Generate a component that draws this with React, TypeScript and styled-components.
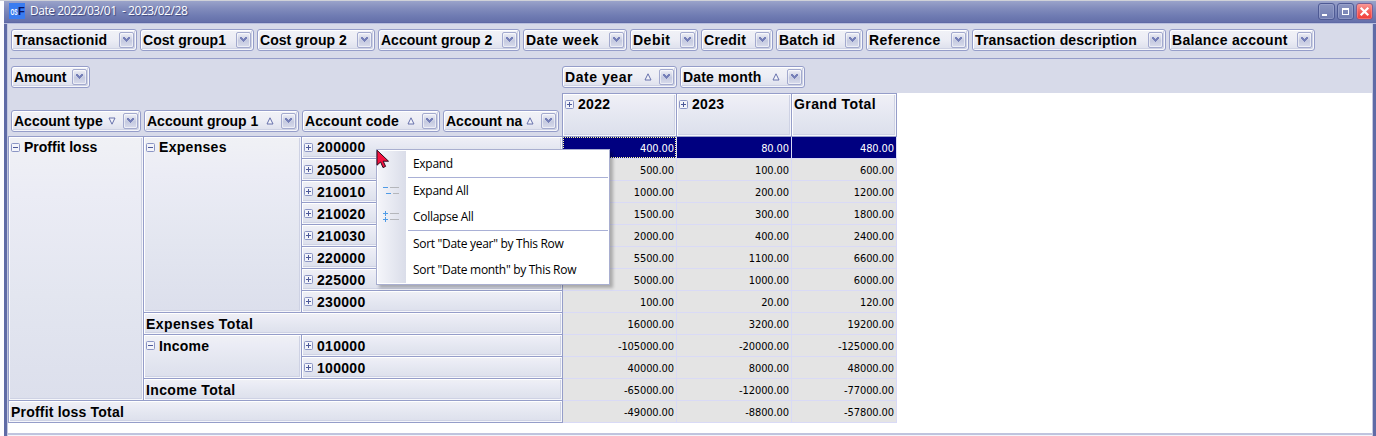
import React from "react";
import styled, { createGlobalStyle, css } from "styled-components";

const line = "#959dc9";
const lavender = "#d7dae9";

const GlobalStyle = createGlobalStyle`
  * { box-sizing: border-box; }
  html, body { margin: 0; background: #fdfdff; }
  body { width: 1376px; height: 436px; overflow: hidden; color: #000; }
`;

const Window = styled.div`
  width: 1376px;
  height: 436px;
  padding-left: 4px;
  overflow: hidden;
  border-top: 1px solid #cfd1d8;
  display: flex;
  flex-direction: column;
`;

const TitleBar = styled.header`
  height: 23px;
  flex: none;
  display: flex;
  align-items: center;
  padding: 0 3px 3px 5px;
  background: linear-gradient(#9aa3ca 0, #838dbd 7px, #6f7bb2 15px, #6570aa 21px, #5863a0 22px, #b9bfdf 22px);
`;

const Title = styled.h1`
  flex: 1;
  margin: 0 0 0 5px;
  font: 400 12px/18px "Open Sans", "Noto Sans", sans-serif;
  letter-spacing: -0.44px;
  white-space: pre;
  color: #fff;
  text-shadow: 1px 1px 1px #3c467c;
`;

const WindowButtons = styled.div`
  display: flex;
  gap: 2px;
`;

const WindowButton = styled.button<{ $close?: boolean }>`
  width: 17px;
  height: 17px;
  padding: 0;
  border: 1px solid ${(p) => (p.$close ? "#7d5f92" : "#4e5a94")};
  border-radius: 3px;
  background: ${(p) => (p.$close ? "linear-gradient(#f99a96, #f4605c 50%, #f03c37)" : "linear-gradient(#8c96c1, #707cb1)")};
  box-shadow: inset 0 0 0 1px ${(p) => (p.$close ? "rgba(255,150,150,.5)" : "rgba(170,178,215,.45)")};
  svg { display: block; }
`;

const Frame = styled.main`
  flex: 1;
  display: flex;
  flex-direction: column;
  padding: 0 1px;
  border-left: 3px solid #5f6ba6;
  border-right: 3px solid #5f6ba6;
  background: #c3c8e0;
`;

const FieldBar = styled.section`
  flex: none;
  height: 35px;
  display: flex;
  align-items: flex-start;
  gap: 3px;
  padding: 5px 0 0 3px;
  background: linear-gradient(${line}, ${line}) 2px 34px / 1360px 1px no-repeat ${lavender};
`;

const bevel = css`
  box-shadow: inset 1px 1px #fff, inset -1px -1px #f6f7fb, inset -2px -2px #ced2e4;
`;

const Chip = styled.div<{ $w: number }>`
  flex: none;
  width: ${(p) => p.$w}px;
  height: 22px;
  display: flex;
  align-items: center;
  padding: 0 2px 0 2px;
  border: 1px solid ${line};
  border-radius: 3px;
  background: linear-gradient(#f1f2f7, #ecedf5 50%, #dcdfec);
  ${bevel}
`;

const Label = styled.span<{ $track?: number }>`
  font: 700 14px/16px "Liberation Sans", Arial, sans-serif;
  letter-spacing: ${(p) => p.$track ?? 0}px;
  white-space: nowrap;
`;

const ChipLabel = styled(Label)`
  flex: 1;
  min-width: 0;
`;

const SortMark = styled.svg`
  flex: none;
  width: 8px;
  height: 8px;
  margin-right: 7px;
`;

const FilterButton = styled.button`
  flex: none;
  width: 15px;
  height: 16px;
  padding: 0;
  border: 1px solid #a3aace;
  border-radius: 2px;
  background: linear-gradient(#f0f1f7, #c5cae0 55%, #d9dcec);
  box-shadow: inset 0 0 0 1px rgba(255, 255, 255, 0.55);
  svg { display: block; }
`;

type Sort = "asc" | "desc";
type Field = { name: string; w: number; track?: number; sort?: Sort };

const FieldChip = ({ name, w, track, sort }: Field) => (
  <Chip $w={w}>
    <ChipLabel $track={track}>{name}</ChipLabel>
    {sort && (
      <SortMark viewBox="0 0 8 8">
        <path d={sort === "asc" ? "M4 .8L7 7H1z" : "M4 7.2L1 1h6z"} fill="#f4f5fb" stroke="#6670ab" />
      </SortMark>
    )}
    <FilterButton aria-label={`Filter ${name}`}>
      <svg width="13" height="14" viewBox="0 0 13 14">
        <path d="M3 4h2v1h1v1h1V5h1V4h2v2H9v1H8v1H7v1H6V8H5V7H4V6H3z" fill="#7680b8" />
      </svg>
    </FilterButton>
  </Chip>
);

const PivotHead = styled.section`
  flex: none;
  height: 78px;
  display: flex;
`;

const RowFieldArea = styled.div`
  width: 554px;
  flex: none;
  display: flex;
  flex-direction: column;
  justify-content: space-between;
  padding: 7px 3px 4px;
  background: ${lavender};
  border-bottom: 1px solid ${line};
`;

const ChipRow = styled.div`
  display: flex;
  gap: 3px;
`;

const ColumnArea = styled.div`
  flex: 1;
  background: #fff;
`;

const ColumnFields = styled(ChipRow)`
  height: 34px;
  padding-top: 7px;
  background: ${lavender};
`;

const ColumnHeads = styled.div`
  width: 335px;
  height: 44px;
  display: grid;
  grid-template-columns: 114px 115px 105px;
  border-left: 1px solid ${line};
  border-top: 1px solid ${line};
`;

const HeadCell = styled.div<{ $lowered?: boolean; $row?: string; $col?: string }>`
  display: flex;
  align-items: flex-start;
  gap: 4px;
  padding: 2px 2px 0;
  grid-row: ${(p) => p.$row ?? "auto"};
  grid-column: ${(p) => p.$col ?? "auto"};
  border-right: 1px solid ${line};
  border-bottom: 1px solid ${line};
  background: linear-gradient(#f0f1f5, #ebecf5 22%, #e3e6f0 60%, #dcdfec);
  ${bevel}
  ${Label} { margin-top: ${(p) => (p.$lowered ? 1 : 0)}px; }
`;

const Toggle = styled.svg`
  flex: none;
  width: 9px;
  height: 9px;
  margin-top: 4px;
`;

const ExpandToggle = ({ open }: { open?: boolean }) => (
  <Toggle viewBox="0 0 9 9">
    <rect x=".5" y=".5" width="8" height="8" rx="1" fill="#f3f4fa" stroke="#8b95c4" />
    <path d={open ? "M2 4.5h5" : "M2 4.5h5M4.5 2v5"} stroke="#4c5898" />
  </Toggle>
);

const PivotBody = styled.section`
  flex: none;
  height: 296px;
  display: flex;
  align-items: flex-start;
  background: #fff;
`;

const RowHeads = styled.div`
  flex: none;
  width: 555px;
  display: grid;
  grid-template-columns: 135px 158px 261px;
  grid-template-rows: repeat(13, 22px);
  border-left: 1px solid ${line};
`;

const Values = styled.div`
  display: grid;
  grid-template-columns: 114px 115px 105px;
  grid-auto-rows: 22px;
`;

const focusRing = css`
  position: relative;
  &::after {
    content: "";
    position: absolute;
    inset: 0;
    border: 1px dotted #ffff9c;
  }
`;

const Value = styled.div<{ $selected?: boolean; $focus?: boolean }>`
  padding: 1px 2px 0 0;
  text-align: right;
  font: 11px/21px "DejaVu Sans Condensed", "DejaVu Sans", sans-serif;
  font-stretch: condensed;
  letter-spacing: -0.1px;
  border-right: 1px solid #d9daf6;
  border-bottom: 1px solid #d9daf6;
  background: ${(p) => (p.$selected ? "#000080" : "#e4e4e4")};
  color: ${(p) => (p.$selected ? "#fff" : "#000")};
  ${(p) => p.$focus && focusRing}
`;

const BottomEdge = styled.footer`
  flex: 1;
  border-top: 2px solid #bfc4de;
  background: #f4f5fb;
`;

const Menu = styled.div`
  position: absolute;
  left: 376px;
  top: 149px;
  width: 234px;
  height: 136px;
  padding: 1px;
  border: 1px solid #a9afd0;
  background: linear-gradient(90deg, #f4f5fa, #dadde9) 1px 1px / 28px 132px no-repeat #fff;
  box-shadow: 3px 3px 3px rgba(0, 0, 0, 0.25);
`;

const MenuItem = styled.div`
  height: 26px;
  display: flex;
  align-items: center;
  font: 12px/26px "Open Sans", "Noto Sans", sans-serif;
  letter-spacing: -0.3px;
  white-space: nowrap;
`;

const MenuIcon = styled.svg`
  flex: none;
  width: 17px;
  height: 12px;
  margin: 0 13px 0 5px;
  shape-rendering: crispEdges;
`;

const MenuRule = styled.hr`
  height: 1px;
  margin: 0 0 0 30px;
  border: 0;
  background: #a9b0d6;
`;

const Cursor = styled.svg`
  position: absolute;
  left: 376px;
  top: 149px;
  width: 14px;
  height: 20px;
`;

const filterFields: Field[] = [
  { name: "Transactionid", w: 126, track: 0.17 },
  { name: "Cost group1", w: 114, track: 0.05 },
  { name: "Cost group 2", w: 118, track: 0.05 },
  { name: "Account group 2", w: 142 },
  { name: "Date week", w: 104, track: 0.5 },
  { name: "Debit", w: 68, track: 0.5 },
  { name: "Credit", w: 72, track: 0.3 },
  { name: "Batch id", w: 87, track: 0.12 },
  { name: "Reference", w: 103, track: 0.45 },
  { name: "Transaction description", w: 194, track: 0.18 },
  { name: "Balance account", w: 146, track: 0.3 },
];

const rowFields: Field[] = [
  { name: "Account type", w: 130, sort: "desc" },
  { name: "Account group 1", w: 155, sort: "asc" },
  { name: "Account code", w: 138, track: 0.1, sort: "asc" },
  { name: "Account na", w: 116, sort: "asc" },
];

const columnFields: Field[] = [
  { name: "Date year", w: 115, track: 0.55, sort: "asc" },
  { name: "Date month", w: 125, track: 0.15, sort: "asc" },
];

const expenseCodes = ["200000", "205000", "210010", "210020", "210030", "220000", "225000", "230000"];
const incomeCodes = ["010000", "100000"];

const values = [
  ["400.00", "80.00", "480.00"],
  ["500.00", "100.00", "600.00"],
  ["1000.00", "200.00", "1200.00"],
  ["1500.00", "300.00", "1800.00"],
  ["2000.00", "400.00", "2400.00"],
  ["5500.00", "1100.00", "6600.00"],
  ["5000.00", "1000.00", "6000.00"],
  ["100.00", "20.00", "120.00"],
  ["16000.00", "3200.00", "19200.00"],
  ["-105000.00", "-20000.00", "-125000.00"],
  ["40000.00", "8000.00", "48000.00"],
  ["-65000.00", "-12000.00", "-77000.00"],
  ["-49000.00", "-8800.00", "-57800.00"],
];

const CodeCell = ({ code, row }: { code: string; row: number }) => (
  <HeadCell $row={`${row}`} $col="3" $lowered={row > 1}>
    <ExpandToggle />
    <Label $track={0.3}>{code}</Label>
  </HeadCell>
);

export default function App() {
  return (
    <>
      <GlobalStyle />
      <Window>
        <TitleBar>
          <svg width="16" height="16" viewBox="0 0 16 16">
            <rect width="16" height="16" fill="#3a7cf0" />
            <text y="12" fontFamily="Liberation Sans, sans-serif" fontWeight="700">
              <tspan x="1.5" fontSize="9" textLength="7" lengthAdjust="spacingAndGlyphs" fill="#fff">OS</tspan>
              <tspan x="9" fontSize="11" fill="#0a1460">F</tspan>
            </text>
          </svg>
          <Title>{"Date 2022/03/01  - 2023/02/28"}</Title>
          <WindowButtons>
            <WindowButton aria-label="Minimize">
              <svg width="15" height="15"><path d="M3 10h5v2H3z" fill="#fff" /></svg>
            </WindowButton>
            <WindowButton aria-label="Maximize">
              <svg width="15" height="15"><path d="M4 4h7v7H4zM5 6v4h5V6z" fill="#fff" fillRule="evenodd" /></svg>
            </WindowButton>
            <WindowButton $close aria-label="Close">
              <svg width="15" height="15"><path d="M3.7 3.7l7.6 7.6M11.3 3.7l-7.6 7.6" stroke="#fff" strokeWidth="2.2" /></svg>
            </WindowButton>
          </WindowButtons>
        </TitleBar>
        <Frame>
          <FieldBar>
            {filterFields.map((f) => <FieldChip key={f.name} {...f} />)}
          </FieldBar>
          <PivotHead>
            <RowFieldArea>
              <ChipRow><FieldChip name="Amount" w={79} track={-0.1} /></ChipRow>
              <ChipRow>{rowFields.map((f) => <FieldChip key={f.name} {...f} />)}</ChipRow>
            </RowFieldArea>
            <ColumnArea>
              <ColumnFields>{columnFields.map((f) => <FieldChip key={f.name} {...f} />)}</ColumnFields>
              <ColumnHeads>
                <HeadCell><ExpandToggle /><Label $track={0.3}>2022</Label></HeadCell>
                <HeadCell><ExpandToggle /><Label $track={0.3}>2023</Label></HeadCell>
                <HeadCell><Label $track={0.4}>Grand Total</Label></HeadCell>
              </ColumnHeads>
            </ColumnArea>
          </PivotHead>
          <PivotBody>
            <RowHeads>
              <HeadCell $row="1 / 13" $col="1"><ExpandToggle open /><Label $track={0.01}>Proffit loss</Label></HeadCell>
              <HeadCell $row="1 / 9" $col="2"><ExpandToggle open /><Label $track={0.3}>Expenses</Label></HeadCell>
              {expenseCodes.map((c, i) => <CodeCell key={c} code={c} row={i + 1} />)}
              <HeadCell $lowered $row="9" $col="2 / 4"><Label $track={0.4}>Expenses Total</Label></HeadCell>
              <HeadCell $lowered $row="10 / 12" $col="2"><ExpandToggle open /><Label $track={0.2}>Income</Label></HeadCell>
              {incomeCodes.map((c, i) => <CodeCell key={c} code={c} row={i + 10} />)}
              <HeadCell $lowered $row="12" $col="2 / 4"><Label $track={0.35}>Income Total</Label></HeadCell>
              <HeadCell $lowered $row="13" $col="1 / 4"><Label $track={0.2}>Proffit loss Total</Label></HeadCell>
            </RowHeads>
            <Values>
              {values.map((row, r) => row.map((v, c) => (
                <Value key={`${r}-${c}`} $selected={r === 0} $focus={r === 0 && c === 0}>{v}</Value>
              )))}
            </Values>
          </PivotBody>
          <BottomEdge />
        </Frame>
      </Window>
      <Menu>
        <MenuItem><MenuIcon />Expand</MenuItem>
        <MenuRule />
        <MenuItem>
          <MenuIcon viewBox="0 0 17 12">
            <path d="M0 2.5h5M3 8.5h5" stroke="#4f9be6" />
            <path d="M7 2.5h9M10 8.5h6" stroke="#b4b6bb" />
          </MenuIcon>
          Expand All
        </MenuItem>
        <MenuItem>
          <MenuIcon viewBox="0 0 17 12">
            <path d="M0 2.5h5M2.5 0v5M0 8.5h5M2.5 6v5" stroke="#4f9be6" />
            <path d="M7 2.5h9M7 8.5h9" stroke="#b4b6bb" />
          </MenuIcon>
          Collapse All
        </MenuItem>
        <MenuRule />
        <MenuItem><MenuIcon />Sort "Date year" by This Row</MenuItem>
        <MenuItem><MenuIcon />Sort "Date month" by This Row</MenuItem>
      </Menu>
      <Cursor viewBox="0 0 14 20">
        <path d="M1 1.2v15l3.6-3.2 2.4 5.6 2.6-1.2-2.4-5.2h5.3z" fill="#f5123f" stroke="#2a0d1c" />
      </Cursor>
    </>
  );
}
